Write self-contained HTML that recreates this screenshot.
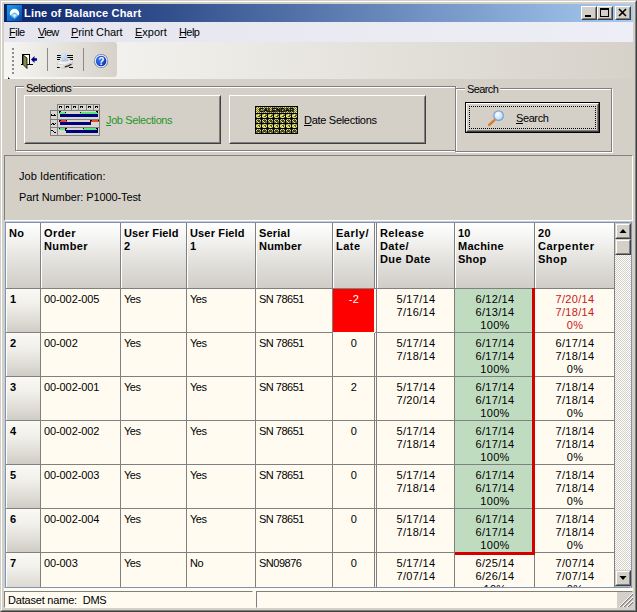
<!DOCTYPE html>
<html><head><meta charset="utf-8"><title>Line of Balance Chart</title>
<style>
html,body{margin:0;padding:0;}
body{width:637px;height:612px;overflow:hidden;background:#d4d0c8;position:relative;font-family:"Liberation Sans","DejaVu Sans",sans-serif;font-size:11px;color:#000;}
div,span.a{position:absolute;box-sizing:border-box;}
span.a{white-space:nowrap;line-height:14px;}
#frame{left:0;top:0;width:637px;height:612px;border:1px solid;border-color:#d4d0c8 #404040 #404040 #d4d0c8;}
#frame2{left:1px;top:1px;width:635px;height:610px;border:1px solid;border-color:#fff #808080 #808080 #fff;}
#title{left:4px;top:4px;width:629px;height:18px;background:linear-gradient(90deg,#0a246a 0%,#a6caf0 100%);}
#title .t{left:20px;top:2px;color:#fff;font-weight:bold;font-size:11px;white-space:nowrap;line-height:14px;}
.tb{top:2px;width:16px;height:14px;background:#d4d0c8;border:1px solid;border-color:#fff #404040 #404040 #fff;}
.tb:after{content:"";position:absolute;left:0;top:0;right:0;bottom:0;border:1px solid;border-color:#d4d0c8 #808080 #808080 #d4d0c8;}
#menu{left:4px;top:22px;width:629px;height:20px;background:linear-gradient(90deg,#e4e5ee,#eeeef6);}
#dock{left:4px;top:42px;width:629px;height:37px;background:linear-gradient(90deg,#f9f8f5 0%,#d6d2ca 100%);}
#tbar{left:4px;top:42px;width:113px;height:35px;background:linear-gradient(90deg,#f7f6f2 0%,#d6d2ca 100%);border-radius:0 3px 3px 0;}
.grip i{position:absolute;left:8px;width:2px;height:2px;background:#8d8d8d;}
.sep{width:1px;height:23px;top:6px;background:#8d8a84;}
.gb{border:1px solid #808080;box-shadow:1px 1px 0 #fff, inset 1px 1px 0 #fff;}
.gbl{background:#d4d0c8;padding:0 2px;line-height:14px;white-space:nowrap;}
.btn{background:#d4d0c8;border:1px solid;border-color:#fff #404040 #404040 #fff;}
.btn:after{content:"";position:absolute;left:0;top:0;right:0;bottom:0;border:1px solid;border-color:#d4d0c8 #808080 #808080 #d4d0c8;}
.hd{top:223px;height:65px;background:linear-gradient(180deg,#ffffff 0%,#f3f3f1 25%,#e2e0dc 60%,#d0cdc7 100%);border-left:1px solid #fff;font-weight:bold;padding:4px 0 0 4px;line-height:13px;white-space:nowrap;overflow:hidden;}
.vs{width:1px;background:#808080;}
.hs{height:1px;background:#808080;}
.row{left:0;width:637px;}
.c{top:0;background:#fffbf0;line-height:13px;padding-top:4px;white-space:nowrap;overflow:hidden;}
.c.l{padding-left:3px;}
.c.m{text-align:center;letter-spacing:0.3px;padding-left:1px;}
.c.no{font-weight:bold;padding-left:3px;border-left:1px solid #fff;background:linear-gradient(180deg,#fbf9f4 0%,#f2f0ea 35%,#dedbd5 75%,#cfccc5 100%);}
.c.redbg{background:#ff0000;color:#fff;}
.c.grn{background:#c0dcc0;}
.c.redtx{color:#c81820;}
u{text-decoration:underline;}
.sbb{left:615px;width:16px;height:16px;background:#d4d0c8;border:1px solid;border-color:#d4d0c8 #404040 #404040 #d4d0c8;}
.sbb:after{content:"";position:absolute;left:0;top:0;right:0;bottom:0;border:1px solid;border-color:#fff #808080 #808080 #fff;}
</style></head><body>
<div id="frame"></div><div id="frame2"></div>
<div id="title"><svg style="position:absolute;left:3px;top:1px" width="15" height="16" viewBox="0 0 15 16"><defs><linearGradient id="ig" x1="0" y1="0" x2="1" y2="1"><stop offset="0" stop-color="#1f9ee4"/><stop offset="0.5" stop-color="#1672cc"/><stop offset="1" stop-color="#0c3c9c"/></linearGradient></defs><rect width="15" height="16" fill="url(#ig)"/><path d="M2.8 8.2 A4.7 4.7 0 0 1 12.2 8.2 Q12 10.8 7.5 14 Q3 10.8 2.8 8.2 Z" fill="#6fd0ff" opacity="0.75"/><path d="M2.8 8.6 A4.7 4.7 0 0 1 12.2 8.6 Q12.2 9.6 11.4 10.6 L10 9.2 A2.7 2.7 0 0 0 5 9.2 L3.6 10.6 Q2.8 9.6 2.8 8.6 Z" fill="#fff"/><path d="M5.2 10 Q7.5 8.2 9.8 10 L7.5 12.8 Z" fill="#d6f2ff" opacity="0.9"/></svg>
<div class="t" id="t_title" style="letter-spacing:0.2px">Line of Balance Chart</div>
<div class="tb" style="left:577px"><svg style="position:absolute;left:0;top:0" width="14" height="12"><rect x="3" y="8" width="6" height="2" fill="#000"/></svg></div>
<div class="tb" style="left:593px"><svg style="position:absolute;left:0;top:0" width="14" height="12"><rect x="2.5" y="1.5" width="8" height="8" fill="none" stroke="#000"/><rect x="2" y="1" width="9" height="2" fill="#000"/></svg></div>
<div class="tb" style="left:611px"><svg style="position:absolute;left:0;top:0" width="14" height="12"><path d="M3 2 L10 9 M10 2 L3 9" stroke="#000" stroke-width="1.6" fill="none"/></svg></div>
</div>
<div id="menu"><span class="a" id="m1" style="left:5px;top:3px;letter-spacing:-0.5px"><u>F</u>ile</span><span class="a" id="m2" style="left:34px;top:3px;letter-spacing:-0.8px"><u>V</u>iew</span><span class="a" id="m3" style="left:67px;top:3px;letter-spacing:-0.1px"><u>P</u>rint Chart</span><span class="a" id="m4" style="left:131px;top:3px;letter-spacing:0px"><u>E</u>xport</span><span class="a" id="m5" style="left:175px;top:3px;letter-spacing:-0.6px"><u>H</u>elp</span></div>
<div id="dock"></div>
<div id="tbar"><div class="grip"><i style="top:6px"></i><i style="top:10px"></i><i style="top:14px"></i><i style="top:18px"></i><i style="top:22px"></i><i style="top:26px"></i><i style="top:30px"></i></div>
<div class="sep" style="left:43px"></div><div class="sep" style="left:79px"></div>
<!-- door icon -->
<svg style="position:absolute;left:16px;top:11px" width="18" height="17" viewBox="0 0 18 17"><rect x="2.5" y="1.5" width="7" height="10" fill="#fff" stroke="#000"/><path d="M1 11.5 H13" stroke="#000" stroke-width="1"/><path d="M3 2 L7 5 L7 15.5 L3 11.5 Z" fill="#8a8a45" stroke="#000" stroke-width="0.8"/><path d="M11 6.5 L14.5 3 L14.5 5.2 L17 5.2 L17 7.8 L14.5 7.8 L14.5 10 Z" fill="#000080"/></svg>
<!-- printer icon -->
<svg style="position:absolute;left:52px;top:10px" width="18" height="18" viewBox="0 0 18 18"><defs><linearGradient id="pg" x1="0" y1="0" x2="1" y2="1"><stop offset="0" stop-color="#ffffff"/><stop offset="0.55" stop-color="#ececec"/><stop offset="1" stop-color="#a8a8a8"/></linearGradient><linearGradient id="pp" x1="0" y1="0" x2="1" y2="1"><stop offset="0" stop-color="#e4effc"/><stop offset="1" stop-color="#9fc2ee"/></linearGradient></defs><g fill="#000" shape-rendering="crispEdges"><rect x="1" y="3" width="4" height="1"/><rect x="1" y="5" width="4" height="1"/><rect x="1" y="7" width="3" height="1"/><rect x="11" y="3" width="6" height="1"/><rect x="11" y="5" width="6" height="1"/><rect x="14" y="7" width="3" height="1"/><rect x="1" y="15" width="3" height="1"/><rect x="13" y="15" width="4" height="1"/></g><path d="M5.6 9 L4.8 4 Q5.5 1.2 9 1 Q10 1 10.3 2 L12 8.6 Z" fill="url(#pp)" stroke="#c4d8f2" stroke-width="0.5"/><path d="M1.5 11 Q1.5 10.2 3 9.6 L6 8.6 L15 8 Q16.8 8 16.8 9.4 L16.8 11.4 Q16.8 12.4 15.5 13 L9.5 15.9 Q8 16.5 6.5 16 L3 15 Q1.5 14.5 1.5 13.5 Z" fill="url(#pg)" stroke="#b4b4b4" stroke-width="0.5"/><path d="M2 12 L8.5 13.4 L16.4 10.4" fill="none" stroke="#c2c2c2" stroke-width="0.7"/><path d="M8.8 14.9 Q12.5 14.2 15.4 12.2" fill="none" stroke="#2a2a2a" stroke-width="1.1"/><path d="M5.8 9.2 L12 8.8" stroke="#8fa8c8" stroke-width="0.7"/></svg>
<!-- help icon -->
<svg style="position:absolute;left:89px;top:11px" width="17" height="17" viewBox="0 0 17 17"><defs><radialGradient id="hg" cx="35%" cy="40%" r="75%"><stop offset="0" stop-color="#3f78ee"/><stop offset="0.6" stop-color="#1a4acc"/><stop offset="1" stop-color="#0a2a9c"/></radialGradient></defs><circle cx="8.1" cy="8" r="7.1" fill="#5a6ea6" opacity="0.85"/><circle cx="8.1" cy="8" r="6.3" fill="#e8f0ff"/><circle cx="8.1" cy="8" r="5.3" fill="url(#hg)"/><text x="8.3" y="11.6" font-family="Liberation Sans, sans-serif" font-weight="bold" font-size="10" fill="#fff" text-anchor="middle">?</text></svg>
</div>
<svg style="position:absolute;left:7px;top:76px" width="4" height="4"><path d="M1 1 L1 3 L3 3 Z" fill="#000"/></svg>

<!-- Selections groupbox -->
<div class="gb" style="left:15px;top:86px;width:441px;height:65px"></div>
<div class="gbl" style="left:24px;top:81px"><span id="g1" style="letter-spacing:-0.55px">Selections</span></div>
<div class="btn" style="left:24px;top:95px;width:197px;height:49px"></div>
<div class="btn" style="left:229px;top:95px;width:197px;height:49px"></div>
<span class="a" id="b1" style="left:106px;top:113px;color:#289428;letter-spacing:-0.38px"><u>J</u>ob Selections</span>
<span class="a" id="b2" style="left:304px;top:113px;letter-spacing:-0.29px"><u>D</u>ate Selections</span>
<!--JOBICON--><svg style="position:absolute;left:50px;top:104px" width="51" height="32" viewBox="0 0 51 32" shape-rendering="crispEdges"><rect x="7" y="0" width="43" height="7" fill="#d9d6cf"/><rect x="0" y="6" width="50" height="25" fill="#d9d6cf"/><rect x="7" y="0" width="43" height="1" fill="#808080"/><rect x="0" y="6" width="50" height="1" fill="#808080"/><rect x="0" y="15" width="50" height="1" fill="#808080"/><rect x="0" y="23" width="50" height="1" fill="#808080"/><rect x="0" y="31" width="50" height="1" fill="#808080"/><rect x="0" y="6" width="1" height="26" fill="#808080"/><rect x="7" y="0" width="1" height="32" fill="#808080"/><rect x="49" y="0" width="1" height="32" fill="#808080"/><rect x="14" y="0" width="1" height="7" fill="#808080"/><rect x="21" y="0" width="1" height="7" fill="#808080"/><rect x="28" y="0" width="1" height="7" fill="#808080"/><rect x="36" y="0" width="1" height="7" fill="#808080"/><rect x="43" y="0" width="1" height="7" fill="#808080"/><path d="M9 2h3v2h-1v-1h-1v1h-1z" fill="#000"/><path d="M16 2h3v2h-1v-1h-1v1h-1z" fill="#000"/><path d="M23 2h3v2h-1v-1h-1v1h-1z" fill="#000"/><path d="M30 2h3v2h-1v-1h-1v1h-1z" fill="#000"/><path d="M38 2h3v2h-1v-1h-1v1h-1z" fill="#000"/><path d="M45 2h3v2h-1v-1h-1v1h-1z" fill="#000"/><path d="M1 10h1v1h2v-1h1v2h-4z M5 11h1v1h-1z" fill="#000"/><path d="M1 20h1v-1h2v1h1v-1h1v1h-1v1h-2v-1h-1v1h-1z" fill="#000"/><path d="M1 26h2v1h1v1h2v1h-2v-1h-1v-1h-2z" fill="#000"/><rect x="9" y="8" width="7" height="2" fill="#5ce27e"/><rect x="30" y="8" width="18" height="2" fill="#5ce27e"/><rect x="10" y="10" width="38" height="3" fill="#00007c"/><path d="M9 7h2v1h-1v1h-1z M15 8h1v1h-1z M30 8h1v1h-1z M46 7h2v2h-1v-1h-1z" fill="#000"/><rect x="10" y="16" width="7" height="2" fill="#ee4434"/><rect x="41" y="16" width="8" height="2" fill="#ee4434"/><rect x="10" y="18" width="31" height="3" fill="#00007c"/><path d="M9 16h2v1h-1v1h-1z M16 16h1v1h-1z M40 16h2v1h-1v2h-1z M48 16h1v1h-1z" fill="#000"/><rect x="9" y="24" width="7" height="2" fill="#5ce27e"/><rect x="33" y="24" width="15" height="2" fill="#5ce27e"/><rect x="16" y="26" width="32" height="3" fill="#00007c"/><path d="M9 24h1v1h-1z M15 24h2v1h-1v2h-1z M33 24h1v1h-1z M46 24h2v2h-1v-1h-1z" fill="#000"/></svg><!--/JOBICON-->
<!--CALICON--><svg style="position:absolute;left:255px;top:106px" width="43" height="28" viewBox="0 0 43 28"><defs><pattern id="dth" width="2" height="2" patternUnits="userSpaceOnUse"><rect width="2" height="2" fill="#e6e67a"/><rect width="1" height="1" fill="#77773c"/><rect x="1" y="1" width="1" height="1" fill="#77773c"/></pattern><pattern id="dth2" width="2" height="2" patternUnits="userSpaceOnUse"><rect width="2" height="2" fill="#e8e878"/><rect width="1" height="1" fill="#b4b45a"/></pattern></defs><rect width="43" height="28" fill="#000"/><rect x="1" y="1" width="41" height="6" fill="url(#dth)"/><text x="21.5" y="6.3" font-family="Liberation Sans, sans-serif" font-weight="bold" font-size="6.2" text-anchor="middle" fill="#000" stroke="#000" stroke-width="0.35" textLength="35" lengthAdjust="spacingAndGlyphs">CALENDAR</text><rect x="1" y="8" width="5" height="4" rx="1.6" ry="1.4" fill="url(#dth2)"/><rect x="4" y="9" width="2" height="1" fill="#000" opacity="0.6"/><rect x="3" y="10" width="2" height="1" fill="#000" opacity="0.6"/><rect x="7" y="8" width="5" height="4" rx="1.6" ry="1.4" fill="url(#dth2)"/><rect x="10" y="9" width="2" height="1" fill="#000" opacity="0.6"/><rect x="9" y="10" width="2" height="1" fill="#000" opacity="0.6"/><rect x="13" y="8" width="5" height="4" rx="1.6" ry="1.4" fill="url(#dth2)"/><rect x="16" y="9" width="2" height="1" fill="#000" opacity="0.6"/><rect x="15" y="10" width="2" height="1" fill="#000" opacity="0.6"/><rect x="19" y="8" width="5" height="4" rx="1.6" ry="1.4" fill="url(#dth2)"/><rect x="22" y="9" width="2" height="1" fill="#000" opacity="0.6"/><rect x="21" y="10" width="2" height="1" fill="#000" opacity="0.6"/><rect x="25" y="8" width="5" height="4" rx="1.6" ry="1.4" fill="url(#dth2)"/><rect x="28" y="9" width="2" height="1" fill="#000" opacity="0.6"/><rect x="27" y="10" width="2" height="1" fill="#000" opacity="0.6"/><rect x="31" y="8" width="5" height="4" rx="1.6" ry="1.4" fill="url(#dth2)"/><rect x="34" y="9" width="2" height="1" fill="#000" opacity="0.6"/><rect x="33" y="10" width="2" height="1" fill="#000" opacity="0.6"/><rect x="37" y="8" width="5" height="4" rx="1.6" ry="1.4" fill="url(#dth2)"/><rect x="40" y="9" width="2" height="1" fill="#000" opacity="0.6"/><rect x="39" y="10" width="2" height="1" fill="#000" opacity="0.6"/><rect x="1" y="13" width="5" height="4" rx="1.6" ry="1.4" fill="url(#dth)"/><rect x="2" y="14" width="3" height="1" fill="#000" opacity="0.6"/><rect x="3" y="15" width="2" height="1" fill="#000" opacity="0.6"/><rect x="7" y="13" width="5" height="4" rx="1.6" ry="1.4" fill="url(#dth)"/><rect x="8" y="14" width="3" height="1" fill="#000" opacity="0.6"/><rect x="9" y="15" width="2" height="1" fill="#000" opacity="0.6"/><rect x="13" y="13" width="5" height="4" rx="1.6" ry="1.4" fill="url(#dth)"/><rect x="14" y="14" width="3" height="1" fill="#000" opacity="0.6"/><rect x="15" y="15" width="2" height="1" fill="#000" opacity="0.6"/><rect x="19" y="13" width="5" height="4" rx="1.6" ry="1.4" fill="url(#dth)"/><rect x="20" y="14" width="3" height="1" fill="#000" opacity="0.6"/><rect x="21" y="15" width="2" height="1" fill="#000" opacity="0.6"/><rect x="25" y="13" width="5" height="4" rx="1.6" ry="1.4" fill="url(#dth)"/><rect x="26" y="14" width="3" height="1" fill="#000" opacity="0.6"/><rect x="27" y="15" width="2" height="1" fill="#000" opacity="0.6"/><rect x="31" y="13" width="5" height="4" rx="1.6" ry="1.4" fill="url(#dth)"/><rect x="32" y="14" width="3" height="1" fill="#000" opacity="0.6"/><rect x="33" y="15" width="2" height="1" fill="#000" opacity="0.6"/><rect x="37" y="13" width="5" height="4" rx="1.6" ry="1.4" fill="url(#dth)"/><rect x="38" y="14" width="3" height="1" fill="#000" opacity="0.6"/><rect x="39" y="15" width="2" height="1" fill="#000" opacity="0.6"/><rect x="1" y="18" width="5" height="4" rx="1.6" ry="1.4" fill="url(#dth2)"/><rect x="3" y="19" width="2" height="1" fill="#000" opacity="0.6"/><rect x="4" y="20" width="1" height="1" fill="#000" opacity="0.6"/><rect x="7" y="18" width="5" height="4" rx="1.6" ry="1.4" fill="url(#dth2)"/><rect x="9" y="19" width="2" height="1" fill="#000" opacity="0.6"/><rect x="10" y="20" width="1" height="1" fill="#000" opacity="0.6"/><rect x="13" y="18" width="5" height="4" rx="1.6" ry="1.4" fill="url(#dth2)"/><rect x="15" y="19" width="2" height="1" fill="#000" opacity="0.6"/><rect x="16" y="20" width="1" height="1" fill="#000" opacity="0.6"/><rect x="19" y="18" width="5" height="4" rx="1.6" ry="1.4" fill="url(#dth2)"/><rect x="21" y="19" width="2" height="1" fill="#000" opacity="0.6"/><rect x="22" y="20" width="1" height="1" fill="#000" opacity="0.6"/><rect x="25" y="18" width="5" height="4" rx="1.6" ry="1.4" fill="url(#dth2)"/><rect x="27" y="19" width="2" height="1" fill="#000" opacity="0.6"/><rect x="28" y="20" width="1" height="1" fill="#000" opacity="0.6"/><rect x="31" y="18" width="5" height="4" rx="1.6" ry="1.4" fill="url(#dth2)"/><rect x="33" y="19" width="2" height="1" fill="#000" opacity="0.6"/><rect x="34" y="20" width="1" height="1" fill="#000" opacity="0.6"/><rect x="37" y="18" width="5" height="4" rx="1.6" ry="1.4" fill="url(#dth2)"/><rect x="39" y="19" width="2" height="1" fill="#000" opacity="0.6"/><rect x="40" y="20" width="1" height="1" fill="#000" opacity="0.6"/><rect x="1" y="23" width="5" height="4" rx="1.6" ry="1.4" fill="url(#dth)"/><rect x="2" y="24" width="3" height="2" fill="#000" opacity="0.6"/><rect x="7" y="23" width="5" height="4" rx="1.6" ry="1.4" fill="url(#dth)"/><rect x="8" y="24" width="3" height="2" fill="#000" opacity="0.6"/><rect x="13" y="23" width="5" height="4" rx="1.6" ry="1.4" fill="url(#dth)"/><rect x="14" y="24" width="3" height="2" fill="#000" opacity="0.6"/><rect x="19" y="23" width="5" height="4" rx="1.6" ry="1.4" fill="url(#dth)"/><rect x="20" y="24" width="3" height="2" fill="#000" opacity="0.6"/><rect x="25" y="23" width="5" height="4" rx="1.6" ry="1.4" fill="url(#dth)"/><rect x="26" y="24" width="3" height="2" fill="#000" opacity="0.6"/><rect x="31" y="23" width="5" height="4" rx="1.6" ry="1.4" fill="url(#dth)"/><rect x="32" y="24" width="3" height="2" fill="#000" opacity="0.6"/><rect x="37" y="23" width="5" height="4" rx="1.6" ry="1.4" fill="url(#dth)"/><rect x="38" y="24" width="3" height="2" fill="#000" opacity="0.6"/></svg><!--/CALICON-->
<!-- Search groupbox -->
<div class="gb" style="left:455px;top:88px;width:157px;height:64px"></div>
<div class="gbl" style="left:465px;top:82px"><span id="g2" style="letter-spacing:-0.6px">Search</span></div>
<div style="left:465px;top:102px;width:135px;height:31px;background:#000"></div>
<div class="btn" style="left:466px;top:103px;width:133px;height:29px"></div>
<div style="left:469px;top:106px;width:127px;height:23px;border:1px dotted #000"></div>
<span class="a" id="b3" style="left:516px;top:111px;letter-spacing:-0.4px"><u>S</u>earch</span>
<svg style="position:absolute;left:486px;top:108px" width="20" height="20" viewBox="0 0 20 20"><defs><radialGradient id="lg" cx="40%" cy="35%" r="70%"><stop offset="0" stop-color="#ffffff"/><stop offset="1" stop-color="#a8d8ff"/></radialGradient></defs><path d="M3 17 L9 11.5" stroke="#e08a3c" stroke-width="2.4" stroke-linecap="round"/><path d="M3 17.6 L8.6 12.4" stroke="#b8621c" stroke-width="0.8"/><circle cx="12.6" cy="7.6" r="4.8" fill="url(#lg)" stroke="#7f9fd0" stroke-width="1.2"/></svg>

<!-- panel 2 -->
<div style="left:4px;top:155px;width:629px;height:66px;border:1px solid;border-color:#808080 #fff #fff #808080"></div>
<span class="a" id="p1" style="left:19px;top:169px;letter-spacing:0.05px">Job Identification:</span>
<span class="a" id="p2" style="left:19px;top:190px;letter-spacing:-0.1px">Part Number: P1000-Test</span>

<!-- grid -->
<div id="gridborder" style="left:4px;top:221px;width:628px;height:368px;border:1px solid;border-color:#c3cedc #8496ae #dfe3e3 #c3cedc;background:#fffbf0"></div><div style="left:5px;top:222px;width:626px;height:366px;border:1px solid;border-color:#8394ad transparent #8394ad #8394ad"></div>
<div class="hd" style="left:6px;width:34px;letter-spacing:0.3px;padding-left:2px">No</div>
<div class="vs" style="left:40px;top:223px;height:65px"></div>
<div class="hd" style="left:41px;width:79px;letter-spacing:0.4px;padding-left:2px">Order<br>Number</div>
<div class="vs" style="left:120px;top:223px;height:65px"></div>
<div class="hd" style="left:121px;width:65px;letter-spacing:0.15px;padding-left:2px">User Field<br>2</div>
<div class="vs" style="left:186px;top:223px;height:65px"></div>
<div class="hd" style="left:187px;width:68px;letter-spacing:0.15px;padding-left:2px">User Field<br>1</div>
<div class="vs" style="left:255px;top:223px;height:65px"></div>
<div class="hd" style="left:256px;width:76px;letter-spacing:0.2px;padding-left:2px">Serial<br>Number</div>
<div class="vs" style="left:332px;top:223px;height:65px"></div>
<div class="hd" style="left:333px;width:41px;letter-spacing:0.5px;padding-left:2px">Early/<br>Late</div>
<div class="vs" style="left:374px;top:223px;height:65px"></div>
<div class="hd" style="left:377px;width:77px;letter-spacing:0.4px;padding-left:2px">Release<br>Date/<br>Due Date</div>
<div class="vs" style="left:454px;top:223px;height:65px"></div>
<div class="hd" style="left:455px;width:79px;letter-spacing:0.25px;padding-left:2px">10<br>Machine<br>Shop</div>
<div class="vs" style="left:534px;top:223px;height:65px"></div>
<div class="hd" style="left:535px;width:79px;letter-spacing:0.5px;padding-left:2px">20<br>Carpenter<br>Shop</div>
<div class="vs" style="left:614px;top:223px;height:65px"></div>
<div class="vs" style="left:376px;top:223px;height:65px"></div>
<div style="left:375px;top:223px;width:1px;height:65px;background:#fff"></div>
<div class="hs" style="left:6px;top:288px;width:609px"></div>
<div class="row" style="top:289px;height:44px;overflow:hidden">
<div class="c no" style="left:6px;width:34px;height:43px;">1</div>
<div class="vs" style="left:40px;top:0;height:44px"></div>
<div class="c l" style="left:41px;width:79px;height:43px;letter-spacing:-0.1px">00-002-005</div>
<div class="vs" style="left:120px;top:0;height:44px"></div>
<div class="c l" style="left:121px;width:65px;height:43px;letter-spacing:-0.5px">Yes</div>
<div class="vs" style="left:186px;top:0;height:44px"></div>
<div class="c l" style="left:187px;width:68px;height:43px;letter-spacing:-0.5px">Yes</div>
<div class="vs" style="left:255px;top:0;height:44px"></div>
<div class="c l" style="left:256px;width:76px;height:43px;letter-spacing:-0.5px">SN 78651</div>
<div class="vs" style="left:332px;top:0;height:44px"></div>
<div class="c m redbg" style="left:333px;width:41px;height:43px;">-2</div>
<div class="vs" style="left:374px;top:0;height:44px"></div>
<div class="c m" style="left:377px;width:77px;height:43px;">5/17/14<br>7/16/14</div>
<div class="vs" style="left:454px;top:0;height:44px"></div>
<div class="c m grn" style="left:455px;width:79px;height:43px;">6/12/14<br>6/13/14<br>100%</div>
<div class="vs" style="left:534px;top:0;height:44px"></div>
<div class="c m redtx" style="left:535px;width:79px;height:43px;">7/20/14<br>7/18/14<br>0%</div>
<div class="vs" style="left:614px;top:0;height:44px"></div>
<div class="vs" style="left:376px;top:0;height:44px"></div>
<div class="hs" style="left:6px;top:43px;width:609px"></div>
<div style="left:333px;top:43px;width:42px;height:1px;background:#fffbf0"></div>
<div style="left:374px;top:0;width:1px;height:44px;background:#fffbf0"></div>
</div>
<div class="row" style="top:333px;height:44px;overflow:hidden">
<div class="c no" style="left:6px;width:34px;height:43px;">2</div>
<div class="vs" style="left:40px;top:0;height:44px"></div>
<div class="c l" style="left:41px;width:79px;height:43px;letter-spacing:-0.1px">00-002</div>
<div class="vs" style="left:120px;top:0;height:44px"></div>
<div class="c l" style="left:121px;width:65px;height:43px;letter-spacing:-0.5px">Yes</div>
<div class="vs" style="left:186px;top:0;height:44px"></div>
<div class="c l" style="left:187px;width:68px;height:43px;letter-spacing:-0.5px">Yes</div>
<div class="vs" style="left:255px;top:0;height:44px"></div>
<div class="c l" style="left:256px;width:76px;height:43px;letter-spacing:-0.5px">SN 78651</div>
<div class="vs" style="left:332px;top:0;height:44px"></div>
<div class="c m" style="left:333px;width:41px;height:43px;">0</div>
<div class="vs" style="left:374px;top:0;height:44px"></div>
<div class="c m" style="left:377px;width:77px;height:43px;">5/17/14<br>7/18/14</div>
<div class="vs" style="left:454px;top:0;height:44px"></div>
<div class="c m grn" style="left:455px;width:79px;height:43px;">6/17/14<br>6/17/14<br>100%</div>
<div class="vs" style="left:534px;top:0;height:44px"></div>
<div class="c m" style="left:535px;width:79px;height:43px;">6/17/14<br>7/18/14<br>0%</div>
<div class="vs" style="left:614px;top:0;height:44px"></div>
<div class="vs" style="left:376px;top:0;height:44px"></div>
<div class="hs" style="left:6px;top:43px;width:609px"></div>
</div>
<div class="row" style="top:377px;height:44px;overflow:hidden">
<div class="c no" style="left:6px;width:34px;height:43px;">3</div>
<div class="vs" style="left:40px;top:0;height:44px"></div>
<div class="c l" style="left:41px;width:79px;height:43px;letter-spacing:-0.1px">00-002-001</div>
<div class="vs" style="left:120px;top:0;height:44px"></div>
<div class="c l" style="left:121px;width:65px;height:43px;letter-spacing:-0.5px">Yes</div>
<div class="vs" style="left:186px;top:0;height:44px"></div>
<div class="c l" style="left:187px;width:68px;height:43px;letter-spacing:-0.5px">Yes</div>
<div class="vs" style="left:255px;top:0;height:44px"></div>
<div class="c l" style="left:256px;width:76px;height:43px;letter-spacing:-0.5px">SN 78651</div>
<div class="vs" style="left:332px;top:0;height:44px"></div>
<div class="c m" style="left:333px;width:41px;height:43px;">2</div>
<div class="vs" style="left:374px;top:0;height:44px"></div>
<div class="c m" style="left:377px;width:77px;height:43px;">5/17/14<br>7/20/14</div>
<div class="vs" style="left:454px;top:0;height:44px"></div>
<div class="c m grn" style="left:455px;width:79px;height:43px;">6/17/14<br>6/17/14<br>100%</div>
<div class="vs" style="left:534px;top:0;height:44px"></div>
<div class="c m" style="left:535px;width:79px;height:43px;">7/18/14<br>7/18/14<br>0%</div>
<div class="vs" style="left:614px;top:0;height:44px"></div>
<div class="vs" style="left:376px;top:0;height:44px"></div>
<div class="hs" style="left:6px;top:43px;width:609px"></div>
</div>
<div class="row" style="top:421px;height:44px;overflow:hidden">
<div class="c no" style="left:6px;width:34px;height:43px;">4</div>
<div class="vs" style="left:40px;top:0;height:44px"></div>
<div class="c l" style="left:41px;width:79px;height:43px;letter-spacing:-0.1px">00-002-002</div>
<div class="vs" style="left:120px;top:0;height:44px"></div>
<div class="c l" style="left:121px;width:65px;height:43px;letter-spacing:-0.5px">Yes</div>
<div class="vs" style="left:186px;top:0;height:44px"></div>
<div class="c l" style="left:187px;width:68px;height:43px;letter-spacing:-0.5px">Yes</div>
<div class="vs" style="left:255px;top:0;height:44px"></div>
<div class="c l" style="left:256px;width:76px;height:43px;letter-spacing:-0.5px">SN 78651</div>
<div class="vs" style="left:332px;top:0;height:44px"></div>
<div class="c m" style="left:333px;width:41px;height:43px;">0</div>
<div class="vs" style="left:374px;top:0;height:44px"></div>
<div class="c m" style="left:377px;width:77px;height:43px;">5/17/14<br>7/18/14</div>
<div class="vs" style="left:454px;top:0;height:44px"></div>
<div class="c m grn" style="left:455px;width:79px;height:43px;">6/17/14<br>6/17/14<br>100%</div>
<div class="vs" style="left:534px;top:0;height:44px"></div>
<div class="c m" style="left:535px;width:79px;height:43px;">7/18/14<br>7/18/14<br>0%</div>
<div class="vs" style="left:614px;top:0;height:44px"></div>
<div class="vs" style="left:376px;top:0;height:44px"></div>
<div class="hs" style="left:6px;top:43px;width:609px"></div>
</div>
<div class="row" style="top:465px;height:44px;overflow:hidden">
<div class="c no" style="left:6px;width:34px;height:43px;">5</div>
<div class="vs" style="left:40px;top:0;height:44px"></div>
<div class="c l" style="left:41px;width:79px;height:43px;letter-spacing:-0.1px">00-002-003</div>
<div class="vs" style="left:120px;top:0;height:44px"></div>
<div class="c l" style="left:121px;width:65px;height:43px;letter-spacing:-0.5px">Yes</div>
<div class="vs" style="left:186px;top:0;height:44px"></div>
<div class="c l" style="left:187px;width:68px;height:43px;letter-spacing:-0.5px">Yes</div>
<div class="vs" style="left:255px;top:0;height:44px"></div>
<div class="c l" style="left:256px;width:76px;height:43px;letter-spacing:-0.5px">SN 78651</div>
<div class="vs" style="left:332px;top:0;height:44px"></div>
<div class="c m" style="left:333px;width:41px;height:43px;">0</div>
<div class="vs" style="left:374px;top:0;height:44px"></div>
<div class="c m" style="left:377px;width:77px;height:43px;">5/17/14<br>7/18/14</div>
<div class="vs" style="left:454px;top:0;height:44px"></div>
<div class="c m grn" style="left:455px;width:79px;height:43px;">6/17/14<br>6/17/14<br>100%</div>
<div class="vs" style="left:534px;top:0;height:44px"></div>
<div class="c m" style="left:535px;width:79px;height:43px;">7/18/14<br>7/18/14<br>0%</div>
<div class="vs" style="left:614px;top:0;height:44px"></div>
<div class="vs" style="left:376px;top:0;height:44px"></div>
<div class="hs" style="left:6px;top:43px;width:609px"></div>
</div>
<div class="row" style="top:509px;height:44px;overflow:hidden">
<div class="c no" style="left:6px;width:34px;height:43px;">6</div>
<div class="vs" style="left:40px;top:0;height:44px"></div>
<div class="c l" style="left:41px;width:79px;height:43px;letter-spacing:-0.1px">00-002-004</div>
<div class="vs" style="left:120px;top:0;height:44px"></div>
<div class="c l" style="left:121px;width:65px;height:43px;letter-spacing:-0.5px">Yes</div>
<div class="vs" style="left:186px;top:0;height:44px"></div>
<div class="c l" style="left:187px;width:68px;height:43px;letter-spacing:-0.5px">Yes</div>
<div class="vs" style="left:255px;top:0;height:44px"></div>
<div class="c l" style="left:256px;width:76px;height:43px;letter-spacing:-0.5px">SN 78651</div>
<div class="vs" style="left:332px;top:0;height:44px"></div>
<div class="c m" style="left:333px;width:41px;height:43px;">0</div>
<div class="vs" style="left:374px;top:0;height:44px"></div>
<div class="c m" style="left:377px;width:77px;height:43px;">5/17/14<br>7/18/14</div>
<div class="vs" style="left:454px;top:0;height:44px"></div>
<div class="c m grn" style="left:455px;width:79px;height:43px;">6/17/14<br>6/17/14<br>100%</div>
<div class="vs" style="left:534px;top:0;height:44px"></div>
<div class="c m" style="left:535px;width:79px;height:43px;">7/18/14<br>7/18/14<br>0%</div>
<div class="vs" style="left:614px;top:0;height:44px"></div>
<div class="vs" style="left:376px;top:0;height:44px"></div>
<div class="hs" style="left:6px;top:43px;width:609px"></div>
</div>
<div class="row" style="top:553px;height:34px;overflow:hidden">
<div class="c no" style="left:6px;width:34px;height:43px;">7</div>
<div class="vs" style="left:40px;top:0;height:44px"></div>
<div class="c l" style="left:41px;width:79px;height:43px;letter-spacing:-0.1px">00-003</div>
<div class="vs" style="left:120px;top:0;height:44px"></div>
<div class="c l" style="left:121px;width:65px;height:43px;letter-spacing:-0.5px">Yes</div>
<div class="vs" style="left:186px;top:0;height:44px"></div>
<div class="c l" style="left:187px;width:68px;height:43px;letter-spacing:-0.5px">No</div>
<div class="vs" style="left:255px;top:0;height:44px"></div>
<div class="c l" style="left:256px;width:76px;height:43px;letter-spacing:-0.5px">SN09876</div>
<div class="vs" style="left:332px;top:0;height:44px"></div>
<div class="c m" style="left:333px;width:41px;height:43px;">0</div>
<div class="vs" style="left:374px;top:0;height:44px"></div>
<div class="c m" style="left:377px;width:77px;height:43px;">5/17/14<br>7/07/14</div>
<div class="vs" style="left:454px;top:0;height:44px"></div>
<div class="c m" style="left:455px;width:79px;height:43px;">6/25/14<br>6/26/14<br>10%</div>
<div class="vs" style="left:534px;top:0;height:44px"></div>
<div class="c m" style="left:535px;width:79px;height:43px;">7/07/14<br>7/07/14<br>0%</div>
<div class="vs" style="left:614px;top:0;height:44px"></div>
<div class="vs" style="left:376px;top:0;height:44px"></div>
</div>
<div style="left:532px;top:288px;width:3px;height:267px;background:#d40000"></div>
<div style="left:455px;top:552px;width:80px;height:3px;background:#d40000"></div>
<!-- scrollbar -->
<div style="left:615px;top:223px;width:16px;height:364px;background-image:conic-gradient(#fff 25%,#d4d0c8 0 50%,#fff 0 75%,#d4d0c8 0);background-size:2px 2px"></div>
<div class="sbb" style="top:223px"><svg style="position:absolute;left:0;top:0" width="14" height="14"><path d="M3.5 9 L10.5 9 L7 5 Z" fill="#000"/></svg></div>
<div class="sbb" style="top:239px;height:16px"></div>
<div class="sbb" style="top:570px"><svg style="position:absolute;left:0;top:0" width="14" height="14"><path d="M3.5 5 L10.5 5 L7 9 Z" fill="#000"/></svg></div>
<div style="left:615px;top:586px;width:16px;height:1px;background:#a9b9cd"></div>
<!-- status bar -->
<div style="left:4px;top:588px;width:629px;height:20px;background:#fffbf0"></div>
<div style="left:4px;top:591px;width:249px;height:17px;border:1px solid;border-color:#808080 #fffbf0 #fffbf0 #808080"></div>
<div style="left:256px;top:591px;width:377px;height:17px;border:1px solid;border-color:#808080 #fffbf0 #fffbf0 #808080"></div>
<div style="left:617px;top:592px;width:16px;height:16px;background:#d4d0c8"></div>
<svg style="position:absolute;left:619px;top:593px" width="14" height="14"><g stroke="#808080" stroke-width="1.4"><path d="M1 14 L14 1M5 14 L14 5M9 14 L14 9"/></g><g stroke="#fff" stroke-width="1"><path d="M0 14 L14 0M4 14 L14 4M8 14 L14 8"/></g></svg>
<span class="a" id="s1" style="left:8px;top:593px;letter-spacing:-0.2px">Dataset name:&nbsp; DMS</span>
</body></html>
